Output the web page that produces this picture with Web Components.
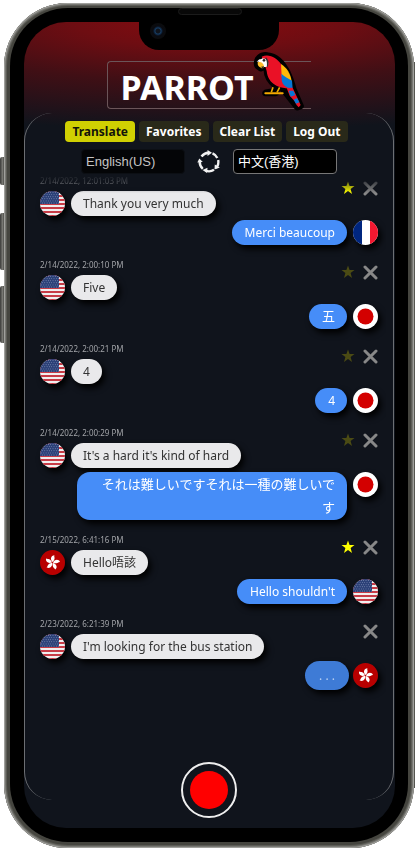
<!DOCTYPE html>
<html lang="en">
<head>
<meta charset="utf-8">
<meta name="viewport" content="width=device-width, initial-scale=1">
<title>Parrot</title>
<style>
  body { margin: 0; background: #fff; font-family: "Noto Sans", "Noto Sans CJK JP", sans-serif; }
</style>
</head>
<body>
<phone-frame>
  <app-title slot="top">PARROT</app-title>
  <nav-bar>
    <nav-button active>Translate</nav-button>
    <nav-button>Favorites</nav-button>
    <nav-button>Clear List</nav-button>
    <nav-button>Log Out</nav-button>
  </nav-bar>
  <language-bar></language-bar>
  <message-list>
    <chat-message time="2/14/2022, 12:01:03 PM" from="us" to="fr" star="on">Thank you very much<span slot="target">Merci beaucoup</span></chat-message>
    <chat-message time="2/14/2022, 2:00:10 PM" from="us" to="jp" star="off">Five<span slot="target" lang="ja">五</span></chat-message>
    <chat-message time="2/14/2022, 2:00:21 PM" from="us" to="jp" star="off">4<span slot="target">4</span></chat-message>
    <chat-message time="2/14/2022, 2:00:29 PM" from="us" to="jp" star="off">It's a hard it's kind of hard<span slot="target" lang="ja">それは難しいですそれは一種の難しいです</span></chat-message>
    <chat-message time="2/15/2022, 6:41:16 PM" from="hk" to="us" star="on">Hello唔該<span slot="target">Hello shouldn't</span></chat-message>
    <chat-message time="2/23/2022, 6:21:39 PM" from="us" to="hk" pending>I'm looking for the bus station<span slot="target">. . .</span></chat-message>
  </message-list>
  <record-button slot="record"></record-button>
</phone-frame>

<script>
function define(name, build) {
  customElements.define(name, class extends HTMLElement {
    connectedCallback() {
      if (this.shadowRoot) return;
      this.attachShadow({ mode: 'open' }).innerHTML = build(this);
    }
  });
}

define('phone-frame', () => `
<style>
  :host { display: block; box-sizing: border-box; min-height: 100vh; padding: 3px 1px 2px 4px; position: relative; }
  .key { position: absolute; left: 0; width: 5px; background: linear-gradient(90deg, #3a3a38, #777772 50%, #33332f); border-radius: 2px 0 0 2px; }
  .k1 { top: 157px; height: 28px; }
  .k2 { top: 213px; height: 57px; }
  .k3 { top: 286px; height: 57px; }
  .rail { position: absolute; right: 0; top: 62px; bottom: 62px; width: 2px; background: #55554f; }
  .metal { position: relative; box-sizing: border-box; min-height: calc(100vh - 5px); display: flex; padding: 5px 6px 6px;
    border-radius: 64px; background: #45453f;
    box-shadow: inset 0 0 0 1px #a0a09c, inset 0 0 0 2px #777772, inset 0 0 0 3px #5c5c56; }
  .bezel { flex: 1; display: flex; padding: 14px 13px 14px 14px; background: #000; border-radius: 58px; }
  .screen { position: relative; flex: 1; min-width: 0; display: flex; flex-direction: column; border-radius: 42px; overflow: hidden;
    background: radial-gradient(ellipse 150% 108px at 50% 0, #870b0f 0%, #6e0d12 24%, #400f15 55%, #20121a 85%, #10141c 100%) #10141c; }
  .notch { position: absolute; top: 0; left: 50%; width: 140px; height: 28px; margin-left: -71px; background: #000; border-radius: 0 0 20px 20px; }
  .lens { position: absolute; left: 11px; top: 1px; width: 16px; height: 16px; border-radius: 50%;
    background: radial-gradient(circle, #10141c 0 2px, #173c60 3px, #0c2039 4px, #0a0b10 5px, #0b0c0e 8px); }
  .speaker { position: absolute; left: 50%; top: 5px; width: 62px; height: 5px; margin-left: -31px; border: 1px solid #1b1b1b; border-radius: 4px; background: #080808; }
  .panel { flex: 1; display: flex; flex-direction: column; box-sizing: border-box; margin: 0 1px 28px 0; padding: 8px 15px 0;
    border: 0 solid #6c6f73; border-width: 0 1px; border-radius: 28px; }
  ::slotted([slot=record]) { position: absolute; left: 50%; bottom: 10px; margin-left: -29px; }
</style>
<div class="key k1"></div><div class="key k2"></div><div class="key k3"></div><div class="rail"></div>
<div class="metal">
  <div class="bezel">
    <div class="screen">
      <div class="notch"><div class="lens"></div></div>
      <slot name="top"></slot>
      <main class="panel"><slot></slot></main>
      <slot name="record"></slot>
    </div>
  </div>
  <div class="speaker"></div>
</div>`);

define('app-title', () => `
<style>
  :host { display: flex; justify-content: center; padding: 39px 2px 4px 0; }
  .box { position: relative; box-sizing: border-box; width: 204px; height: 48px; padding-left: 13px;
    border: 1px solid #6b5559; border-right: 0; border-radius: 4px 0 0 4px; }
  h1 { margin: 0; font-size: 34px; line-height: 50px; font-weight: 700; color: #fff; }
  svg { position: absolute; left: 138px; top: -17px; }
</style>
<div class="box">
  <h1><slot></slot></h1>
  <svg width="65" height="75" viewBox="0 0 195 225" aria-hidden="true">
    <g stroke="#000" stroke-width="19" stroke-linejoin="round" stroke-linecap="round" fill="#000">
      <path d="M34 62C28 42 46 28 64 31C92 34 112 56 126 86C136 106 139 122 142 132L164 183L154 187L131 158L107 127L92 127L90 144H58L60 143L86 138L90 124C76 112 62 94 62 74L56 64L44 70Z"/>
    </g>
    <path d="M47 35C70 25 92 39 105 57L122 92L135 126L124 130C104 129 66 120 62 78L52 46Z" fill="#ea1126"/>
    <path d="M38 48C45 38 62 38 66 50C69 61 63 68 53 65L37 57Z" fill="#fff"/>
    <path d="M60 37C67 45 72 54 63 69C62 58 65 49 58 41Z" fill="#333"/>
    <path d="M32 50L40 43L49 49L48 40L56 45V54L44 49Z" fill="#fff"/>
    <circle cx="54" cy="46" r="4" fill="#262626"/>
    <path d="M35 52C43 48 53 54 54 64C54 70 48 71 45 68C39 66 34 62 35 52Z" fill="#ffbe2c"/>
    <path d="M45 65L54 64L51 72Z" fill="#2e2b2b"/>
    <path d="M105 57C122 67 135 88 137 110L120 106L107 94Z" fill="#ffb908"/>
    <path d="M106 86C117 96 128 101 138 107L140 130C124 132 109 121 107 105Z" fill="#0877d5"/>
    <path d="M122 129L140 128L164 180L158 187Q150 180 146 169L131 152Z" fill="#ea1126"/>
    <path d="M128 137L142 137L148 150L134 155ZM143 164L153 159L160 172L150 176Z" fill="#0877d5"/>
    <path d="M81 127L76 142M101 127L93 142" stroke="#e8a800" stroke-width="5"/>
    <path d="M58 145H110" stroke="#f3a900" stroke-width="6" stroke-linecap="round"/>
  </svg>
</div>`);

define('nav-bar', () => `
<style>
  :host { display: block; }
  nav { display: flex; justify-content: center; gap: 4px; margin-right: 5px; }
</style>
<nav><slot></slot></nav>`);

define('nav-button', el => `
<style>
  :host { display: block; }
  button { display: block; margin: 0; padding: 0 7px; border: 0; border-radius: 4px; font: 700 12px/21px "Noto Sans", sans-serif;
    color: #fff; background: #292919; white-space: nowrap; }
  :host([active]) button { color: #12140a; background: #d0d002; }
</style>
<button type="button"${el.hasAttribute('active') ? ' aria-pressed="true"' : ''}><slot></slot></button>`);

define('language-bar', () => `
<style>
  :host { display: flex; justify-content: center; align-items: center; gap: 12px; margin-top: 7px; }
  select { appearance: none; box-sizing: border-box; width: 104px; height: 25px; margin: 0; padding: 0 4px; border-radius: 4px;
    font: 13px "Liberation Sans", "Noto Sans CJK JP", sans-serif; color: #c4c4c4; background: #040507; border: 1px solid #0c0f14; }
  select.to { color: #fff; background: #000; border-color: #777; }
  button { display: block; width: 24px; height: 24px; padding: 0; border: 0; background: none; }
  svg { display: block; }
</style>
<select aria-label="From language"><option>English(US)</option></select>
<button type="button" aria-label="Swap languages">
  <svg width="24" height="24" viewBox="0 0 24 24" fill="none" stroke="#f2f2f2" stroke-width="2.400">
    <path d="M4.500 6.500A9.300 9.300 0 0 1 11.500 2.700"/><path d="M10.500 0L15 2.800L10.500 6Z" fill="#f2f2f2" stroke="none"/>
    <path d="M15.500 3.400A9.300 9.300 0 0 1 20.300 8"/>
    <path d="M2.700 11.500A9.300 9.300 0 0 0 5.800 18.800"/><path d="M.3 12.500L2.300 8.500L5.800 12Z" fill="#f2f2f2" stroke="none"/>
    <path d="M21.200 10A9.300 9.300 0 0 1 19 18"/><path d="M22.800 17.500L17.500 19.500L17.800 14.500Z" fill="#f2f2f2" stroke="none"/>
    <path d="M8.500 20.600A9.300 9.300 0 0 0 17 19.800"/><path d="M5.500 20L10.500 17.800L10 23Z" fill="#f2f2f2" stroke="none"/>
  </svg>
</button>
<select class="to" aria-label="To language" lang="zh-HK"><option>中文(香港)</option></select>`);

define('message-list', () => `
<style>
  :host { display: flex; flex-direction: column; gap: 14px; margin: 1px -8px 0; padding: 0 8px 20px;
    -webkit-mask-image: linear-gradient(transparent, #000 18px); mask-image: linear-gradient(transparent, #000 18px); }
</style>
<slot></slot>`);

const stripes = [0, 1, 2, 3, 4, 5, 6].map(i => `<rect y="${i * 4}" width="25" height="2" fill="#c73b46"/>`).join('');
let dots = '';
for (let r = 0; r < 6; r++) for (let c = 0; c < 8; c++)
  dots += `<circle cx="${1.5 + c * 2.3 + (r % 2)}" cy="${1.5 + r * 2.1}" r=".45"/>`;
const petals = [0, 72, 144, 216, 288].map(a =>
  `<path transform="rotate(${a + 8} 12.5 12.5)" d="M12.500 12C9.500 10 9.800 5.500 13.500 5C12.500 6.500 15.800 7.500 12.500 12Z"/>`).join('');
const flags = {
  us: `<rect width="25" height="25" fill="#f1eeee"/>${stripes}<rect width="19" height="13" fill="#2c4178"/><g fill="#a9b4d2">${dots}</g>`,
  fr: `<rect width="25" height="25" fill="#fff"/><rect width="9" height="25" fill="#00267f"/><rect x="17" width="8" height="25" fill="#f31830"/>`,
  jp: `<rect width="25" height="25" fill="#fff"/><circle cx="12.500" cy="12.500" r="8" fill="#d30000"/>`,
  hk: `<rect width="25" height="25" fill="#b80000"/><g fill="#fff">${petals}</g>`
};
const names = { us: 'United States', fr: 'France', jp: 'Japan', hk: 'Hong Kong' };

define('flag-icon', el => `
<style>
  :host { display: block; flex: none; width: 25px; height: 25px; border-radius: 50%; overflow: hidden; box-shadow: 3px 4px 6px #000; }
  svg { display: block; }
</style>
<svg width="25" height="25" viewBox="0 0 25 25" role="img" aria-label="${names[el.getAttribute('code')]}">${flags[el.getAttribute('code')]}</svg>`);

define('chat-message', el => `
<style>
  :host { display: grid; grid-template-columns: 1fr auto; }
  time { font-size: 8px; line-height: 12px; color: #a2a4a8; }
  .actions { grid-column: 2; grid-row: 1 / 3; display: flex; align-items: start; gap: 8px; padding-top: 6px; }
  button { display: block; padding: 0; border: 0; background: none; }
  svg { display: block; }
  .row { display: flex; align-items: start; gap: 6px; }
  .source { grid-column: 1; margin-top: 4px; }
  .target { grid-column: 1 / 3; justify-content: flex-end; margin-top: 4px; }
  .bubble { box-sizing: border-box; padding: 1px 12px; border-radius: 13px; font-size: 12px; line-height: 23px;
    color: #333; background: #e9e9eb; box-shadow: 3px 4px 6px #000; }
  .target .bubble { max-width: 80%; padding-left: 13px; color: #fff; background: #468df8; text-align: right; }
  ::slotted([lang=ja]) { display: block; font-size: 13px; }
  :host([pending]) .target { gap: 4px; }
  :host([pending]) .target .bubble { margin: -2px 0; padding: 3px 14px; border-radius: 15px; color: #b9d0f2; background: #3e7bd6; }
</style>
<time>${el.getAttribute('time')}</time>
<div class="actions">
  ${el.hasAttribute('star') ? `<button type="button" aria-label="Favorite"><svg width="14" height="14" viewBox="0 0 14 14"><path fill="${el.getAttribute('star') === 'on' ? '#ffff00' : '#4b4b14'}" d="M7 .5L8.600 5H13.500L9.600 8L11 13L7 10L3 13L4.400 8L.5 5H5.400Z"/></svg></button>` : ''}
  <button type="button" aria-label="Delete"><svg width="15" height="15" viewBox="0 0 15 15"><path d="M2 2L13 13M13 2L2 13" stroke="#888" stroke-width="3" stroke-linecap="round"/></svg></button>
</div>
<div class="row source"><flag-icon code="${el.getAttribute('from')}"></flag-icon><div class="bubble"><slot></slot></div></div>
<div class="row target"><div class="bubble"><slot name="target"></slot></div><flag-icon code="${el.getAttribute('to')}"></flag-icon></div>`);

define('record-button', () => `
<style>
  :host { display: block; }
  button { display: block; box-sizing: border-box; width: 56px; height: 56px; padding: 7px; border: 2px solid #eee; border-radius: 50%;
    background: #ff0000 content-box; }
</style>
<button type="button" aria-label="Record"></button>`);
</script>
</body>
</html>
